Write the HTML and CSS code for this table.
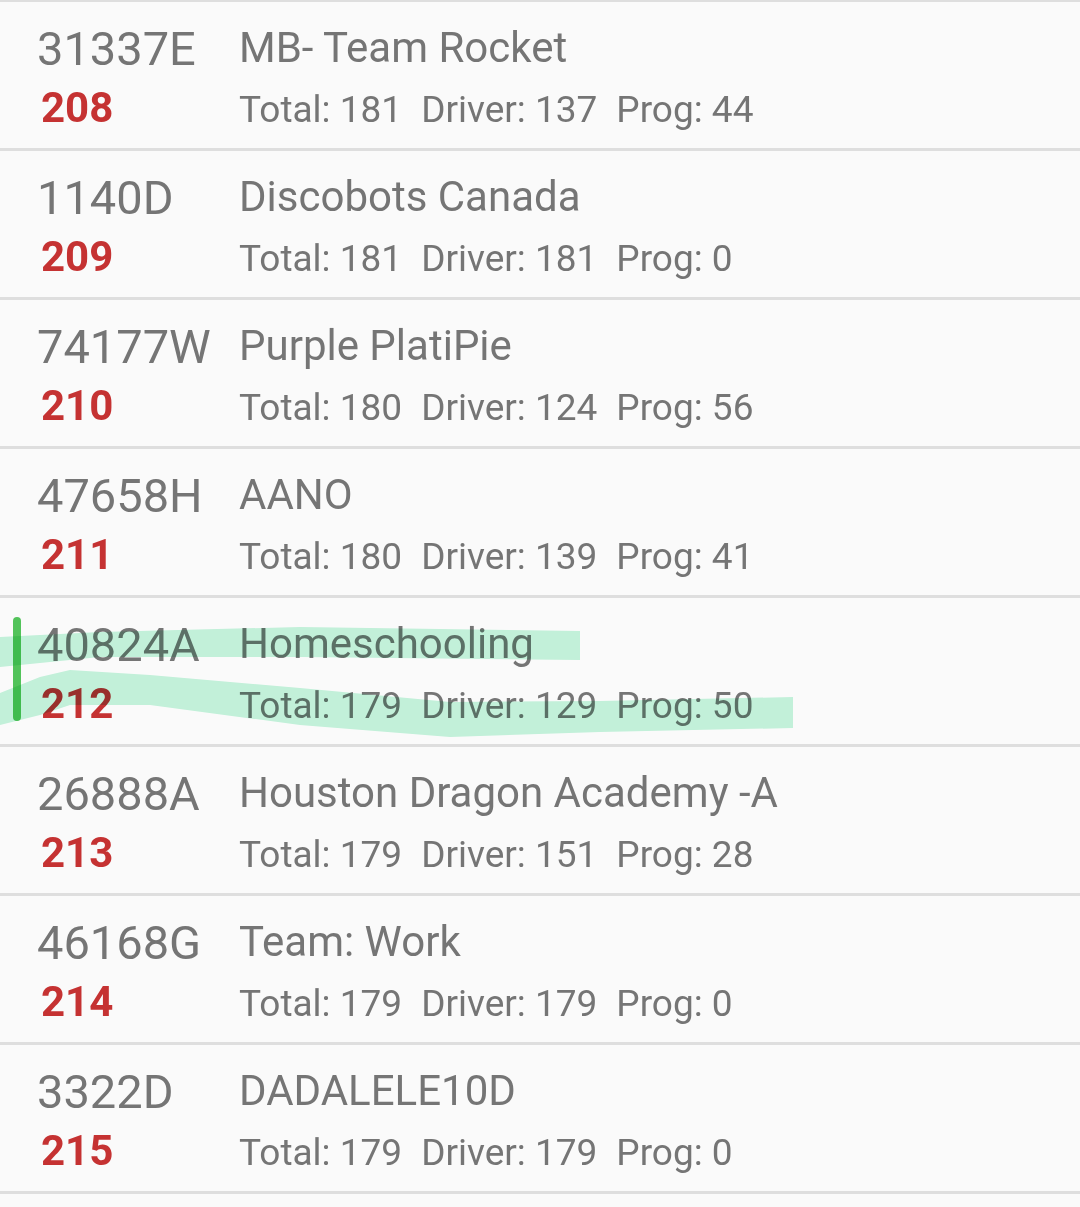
FILE: index.html
```html
<!DOCTYPE html>
<html lang="en">
<head>
    <meta charset="UTF-8">
    <meta name="viewport" content="width=device-width, initial-scale=1.0">
    <title>Skills Rankings</title>
    <link rel="stylesheet" href="styles.css">
</head>
<body>
    <div class="rank-list">
        <div class="team-row">
            <div class="team-id">
                <div class="team-number">31337E</div>
                <div class="team-rank">208</div>
            </div>
            <div class="team-info">
                <div class="team-name">MB- Team Rocket</div>
                <div class="team-stats"><span>Total: 181</span><span>Driver: 137</span><span>Prog: 44</span></div>
            </div>
        </div>
        <div class="team-row">
            <div class="team-id">
                <div class="team-number">1140D</div>
                <div class="team-rank">209</div>
            </div>
            <div class="team-info">
                <div class="team-name">Discobots Canada</div>
                <div class="team-stats"><span>Total: 181</span><span>Driver: 181</span><span>Prog: 0</span></div>
            </div>
        </div>
        <div class="team-row">
            <div class="team-id">
                <div class="team-number">74177W</div>
                <div class="team-rank">210</div>
            </div>
            <div class="team-info">
                <div class="team-name">Purple PlatiPie</div>
                <div class="team-stats"><span>Total: 180</span><span>Driver: 124</span><span>Prog: 56</span></div>
            </div>
        </div>
        <div class="team-row">
            <div class="team-id">
                <div class="team-number">47658H</div>
                <div class="team-rank">211</div>
            </div>
            <div class="team-info">
                <div class="team-name">AANO</div>
                <div class="team-stats"><span>Total: 180</span><span>Driver: 139</span><span>Prog: 41</span></div>
            </div>
        </div>
        <div class="team-row current">
            <div class="current-bar"></div>
            <div class="team-id">
                <div class="team-number">40824A</div>
                <div class="team-rank">212</div>
            </div>
            <div class="team-info">
                <div class="team-name">Homeschooling</div>
                <div class="team-stats"><span>Total: 179</span><span>Driver: 129</span><span>Prog: 50</span></div>
            </div>
            <!-- marker scribble over the row -->
            <svg class="marker" width="1080" height="146" viewBox="0 0 1080 146">
                <path d="M0 39 L100 34 L300 29 L580 33 L580 62 L300 59 L100 59 L50 64 L0 69 Z"/>
                <path d="M0 95 L40 79 L70 72 L150 77 L300 90 L450 104 L600 103 L793 99 L793 130 L600 134 L450 139 L300 127 L150 107 L70 107 L40 117 L0 127 Z"/>
            </svg>
        </div>
        <div class="team-row">
            <div class="team-id">
                <div class="team-number">26888A</div>
                <div class="team-rank">213</div>
            </div>
            <div class="team-info">
                <div class="team-name">Houston Dragon Academy -A</div>
                <div class="team-stats"><span>Total: 179</span><span>Driver: 151</span><span>Prog: 28</span></div>
            </div>
        </div>
        <div class="team-row">
            <div class="team-id">
                <div class="team-number">46168G</div>
                <div class="team-rank">214</div>
            </div>
            <div class="team-info">
                <div class="team-name">Team: Work</div>
                <div class="team-stats"><span>Total: 179</span><span>Driver: 179</span><span>Prog: 0</span></div>
            </div>
        </div>
        <div class="team-row last">
            <div class="team-id">
                <div class="team-number">3322D</div>
                <div class="team-rank">215</div>
            </div>
            <div class="team-info">
                <div class="team-name">DADALELE10D</div>
                <div class="team-stats"><span>Total: 179</span><span>Driver: 179</span><span>Prog: 0</span></div>
            </div>
        </div>
    </div>
</body>
</html>
```

FILE: styles.css
```css
body {
    margin: 0;
    background-color: #fafafa;
    font-family: Roboto, 'Noto Sans', sans-serif;
    color: #757575;
    overflow: hidden;
}
.rank-list {
    margin-top: -1px;
}
.team-row {
    position: relative;
    display: flex;
    padding: 17px 0 0 36px;
    height: 129px;
    border-top: 3px solid #dedede;
}
.team-row.last {
    border-bottom: 3px solid #dedede;
}
.team-id {
    width: 203px;
    flex-shrink: 0;
}
.team-number {
    font-size: 47px;
    line-height: 60px;
    padding-left: 1px;
}
.team-rank {
    font-size: 42px;
    line-height: 58px;
    font-weight: bold;
    color: #c53232;
    padding-left: 5px;
}
.team-name {
    font-size: 42px;
    line-height: 58px;
}
.team-stats {
    font-size: 37px;
    line-height: 66px;
}
.team-stats span {
    margin-right: 19px;
}
.current-bar {
    position: absolute;
    left: 13px;
    top: 19px;
    width: 8px;
    height: 104px;
    border-radius: 4px;
    background-color: #52c35a;
}
.marker {
    position: absolute;
    left: 0;
    top: 0;
    mix-blend-mode: multiply;
}
.marker path {
    fill: #c6f5de;
}
```
